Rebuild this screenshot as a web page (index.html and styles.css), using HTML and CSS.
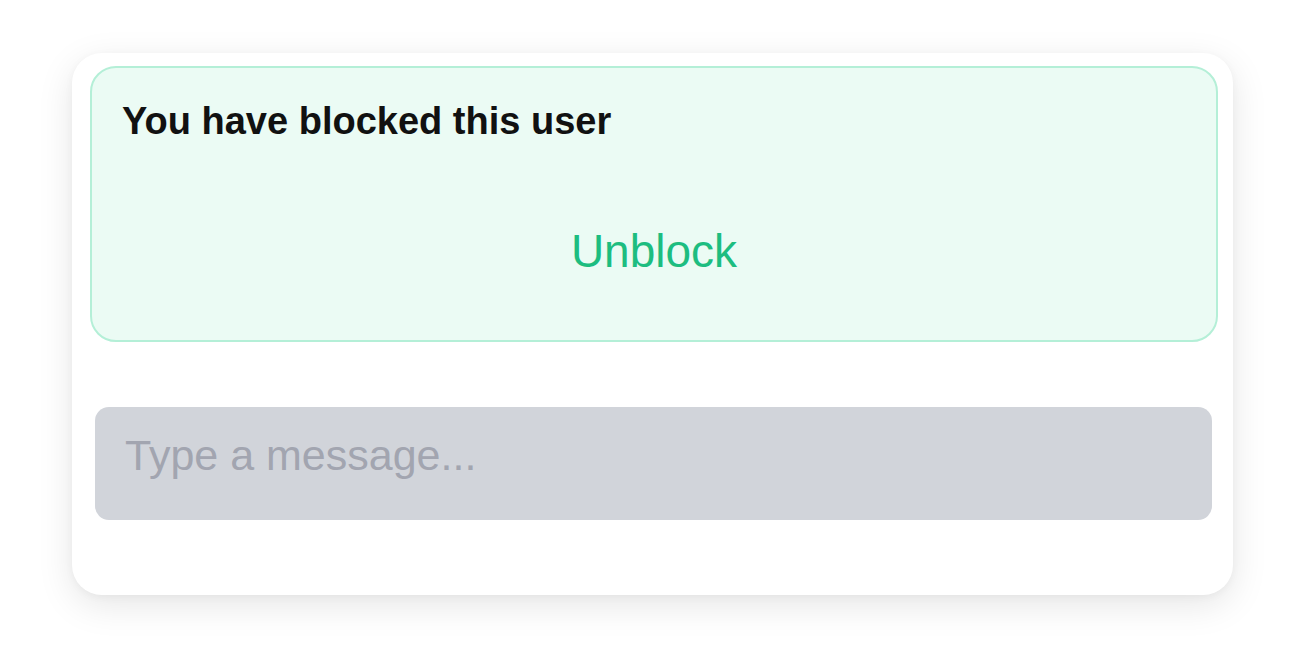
FILE: index.html
```html
<!DOCTYPE html>
<html lang="en">
<head>
<meta charset="utf-8">
<title>Blocked user</title>
<link rel="stylesheet" href="styles.css">
</head>
<body>
  <div class="card">
    <div class="blocked">
      <div class="blocked-title">You have blocked this user</div>
      <div class="unblock">Unblock</div>
    </div>
    <div class="composer">
      <input class="message-input" type="text" placeholder="Type a message..." disabled>
    </div>
  </div>
</body>
</html>
```
FILE: styles.css
```css
html, body {
  margin: 0;
  padding: 0;
  background: #ffffff;
  font-family: "Liberation Sans", Arial, sans-serif;
}

body {
  box-sizing: border-box;
  min-height: 100vh;
  padding: 53px 0 0 72px;
}

.card {
  box-sizing: border-box;
  width: 1161px;
  height: 542px;
  background: #ffffff;
  border-radius: 30px;
  box-shadow: 0 10px 36px rgba(0, 0, 0, 0.10), 0 2px 8px rgba(0, 0, 0, 0.04);
  padding: 13px 15px 0 18px;
  display: flex;
  flex-direction: column;
}

.blocked {
  box-sizing: border-box;
  height: 276px;
  background: #ebfbf4;
  border: 2px solid #b4efd7;
  border-radius: 26px;
  padding: 31px 30px 0 30px;
  display: flex;
  flex-direction: column;
}

.blocked-title {
  font-size: 38px;
  line-height: 44px;
  font-weight: 700;
  color: #111111;
}

.unblock {
  margin-top: 82px;
  text-align: center;
  font-size: 46px;
  line-height: 52px;
  color: #1dbd80;
}

.composer {
  margin: 65px 6px 0 5px;
}

.message-input {
  box-sizing: border-box;
  display: block;
  width: 100%;
  height: 113px;
  border: none;
  outline: none;
  border-radius: 14px;
  background: #d1d4da;
  padding: 12px 30px 28px;
  font-family: "Liberation Sans", Arial, sans-serif;
  font-size: 43px;
  line-height: 50px;
  color: #a2a5b0;
}

.message-input::placeholder {
  color: #a2a5b0;
  opacity: 1;
}
```
